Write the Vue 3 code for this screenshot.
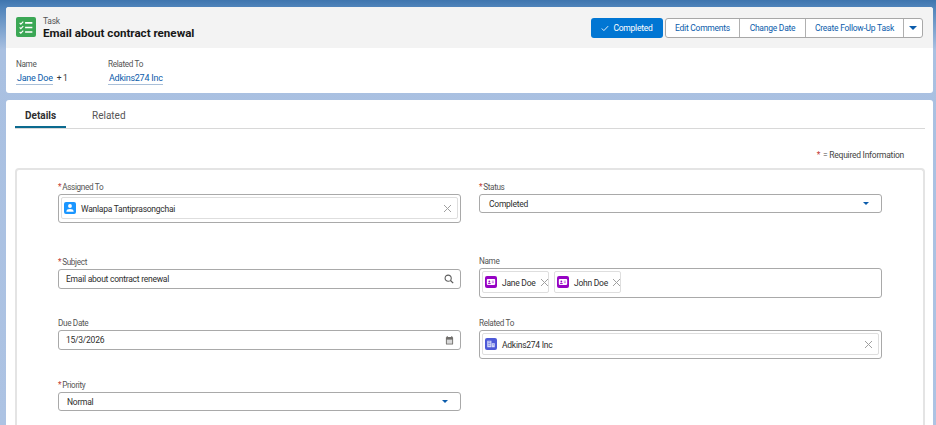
<template>
  <div class="page">
    <section class="highlights">
      <div class="head">
        <div class="icon-task">
          <svg viewBox="0 0 22 22" width="20" height="20">
            <path d="M4 6.500l1.300 1.300L8 5M4 11.500l1.300 1.300L8 10M4 16.500l1.300 1.300L8 15" fill="none" stroke="#fff" stroke-width="1.300" />
            <path d="M10 6.500h8M10 11.500h8M10 16.500h8" fill="none" stroke="#fff" stroke-width="1.800" />
          </svg>
        </div>
        <div class="head-text">
          <div class="entity">Task</div>
          <div class="title">Email about contract renewal</div>
        </div>
        <div class="actions">
          <button class="btn-done">
            <svg viewBox="0 0 10 8" width="8" height="7"><path d="M1 4l2.600 2.600L9 1" fill="none" stroke="#fff" stroke-width="1.100" /></svg>
            Completed
          </button>
          <div class="btn-group">
            <button v-for="b in actions" :key="b.label" class="btn" :style="{ width: b.w + 'px' }">{{ b.label }}</button>
            <button class="btn more"><span class="caret"></span></button>
          </div>
        </div>
      </div>
      <div class="meta">
        <div class="meta-item name-item">
          <div class="meta-label">Name</div>
          <div><a class="meta-link">Jane Doe</a><span class="plus">+ 1</span></div>
        </div>
        <div class="meta-item">
          <div class="meta-label">Related To</div>
          <div><a class="meta-link">Adkins274 Inc</a></div>
        </div>
      </div>
    </section>

    <section class="detail">
      <div class="tabs">
        <div class="tab active">Details</div>
        <div class="tab">Related</div>
      </div>
      <div class="required-note"><span class="star">*</span> = Required Information</div>

      <div class="form-card">
        <div class="col">
          <div class="field f-assigned">
            <label><span class="star">*</span>Assigned To</label>
            <div class="box lookup">
              <div class="pill wide">
                <span class="icon-sm user">
                  <svg viewBox="0 0 12 12" width="10" height="10"><circle cx="6" cy="3.600" r="2.300" fill="#fff" /><path d="M1.600 10.400c0-2.300 1.800-3.200 4.400-3.200s4.400.9 4.400 3.200z" fill="#fff" /></svg>
                </span>
                <span class="pill-text">Wanlapa Tantiprasongchai</span>
                <span class="x"></span>
              </div>
            </div>
          </div>
          <div class="field f-subject">
            <label><span class="star">*</span>Subject</label>
            <div class="box input">
              <span>Email about contract renewal</span>
              <svg viewBox="0 0 12 12" width="10" height="10"><circle cx="5" cy="5" r="3.700" fill="none" stroke="#5c5c5c" stroke-width="1.300" /><path d="M7.800 7.800L11 11" stroke="#5c5c5c" stroke-width="1.500" /></svg>
            </div>
          </div>
          <div class="field f-due">
            <label>Due Date</label>
            <div class="box input">
              <span>15/3/2026</span>
              <svg viewBox="0 0 10 10" width="9" height="9"><path d="M2.500 0v1.500M7.500 0v1.500" stroke="#706e6b" stroke-width="1" /><rect x="1" y="1" width="8" height="8.500" rx="1" fill="#706e6b" /><rect x="2" y="4" width="6" height="4.500" fill="#d8d8d8" /></svg>
            </div>
          </div>
          <div class="field f-priority">
            <label><span class="star">*</span>Priority</label>
            <div class="box input select">
              <span>Normal</span>
              <span class="caret small"></span>
            </div>
          </div>
        </div>

        <div class="col">
          <div class="field f-status">
            <label><span class="star">*</span>Status</label>
            <div class="box input select">
              <span class="status-text">Completed</span>
              <span class="caret small"></span>
            </div>
          </div>
          <div class="field f-name">
            <label>Name</label>
            <div class="box lookup multi">
              <div v-for="p in people" :key="p" class="pill">
                <span class="icon-sm contact">
                  <svg viewBox="0 0 12 12" width="10" height="10"><rect x="1" y="2.500" width="10" height="7" rx="1" fill="#fff" /><circle cx="4" cy="5.300" r="1.100" fill="#9603c4" /><path d="M2.500 8c0-1 3-1 3 0zM7 5h2.500M7 6.800h2.500" fill="#9603c4" stroke="#9603c4" stroke-width=".6" /></svg>
                </span>
                <span class="pill-text">{{ p }}</span>
                <span class="x"></span>
              </div>
            </div>
          </div>
          <div class="field f-related">
            <label>Related To</label>
            <div class="box lookup">
              <div class="pill wide">
                <span class="icon-sm account">
                  <svg viewBox="0 0 12 12" width="10" height="10"><path d="M1.500 2h5v8h-5zM7 5h3.500v5H7z" fill="#d6dcf8" /><path d="M2.700 3.500h2.600M2.700 5.500h2.600M2.700 7.500h2.600M8 7h1.500" stroke="#4e5ad8" stroke-width=".8" /></svg>
                </span>
                <span class="pill-text">Adkins274 Inc</span>
                <span class="x"></span>
              </div>
            </div>
          </div>
        </div>
      </div>
    </section>
  </div>
</template>

<script setup>
const actions = [
  { label: 'Edit Comments', w: 74 },
  { label: 'Change Date', w: 66 },
  { label: 'Create Follow-Up Task', w: 98 }
]
const people = ['Jane Doe', 'John Doe']
</script>

<style scoped>
.page {
  width: 936px;
  height: 425px;
  overflow: hidden;
  box-sizing: border-box;
  padding: 7px 3px 0 6px;
  background: linear-gradient(180deg, #3f75ae 0, #4f83ba 7px, #a9c0e1 50px, #adc3e3 100%);
  font-family: Roboto, "Liberation Sans", sans-serif;
  font-size: 8.500px;
  letter-spacing: -0.25px;
  color: #2e2e2e;
}

.highlights {
  height: 86px;
  background: #fff;
  border-radius: 3px;
  overflow: hidden;
}

.head {
  height: 41px;
  box-sizing: border-box;
  padding: 10px 10px 0 10px;
  background: #f3f3f3;
  display: flex;
  align-items: flex-start;
}

.icon-task {
  width: 20px;
  height: 20px;
  border-radius: 2px;
  background: #3ba755;
  display: flex;
}

.head-text {
  margin-left: 7px;
  margin-top: -1px;
}

.entity {
  line-height: 11px;
  color: #555;
}

.title {
  font-size: 11.600px;
  font-weight: 700;
  line-height: 13px;
  letter-spacing: 0;
  color: #181818;
}

.actions {
  margin-left: auto;
  display: flex;
  gap: 2px;
}

button {
  font: inherit;
  letter-spacing: inherit;
  margin: 0;
  padding: 0;
  cursor: pointer;
}

.btn-done {
  width: 72px;
  height: 20px;
  margin-top: 1px;
  border: 0;
  border-radius: 3px;
  background: #0176d3;
  color: #fff;
  display: flex;
  align-items: center;
  justify-content: center;
  gap: 4px;
}

.btn-group {
  display: flex;
  height: 20px;
  margin-top: 1px;
  box-sizing: border-box;
  border: 1px solid #a8a8a8;
  border-radius: 3px;
  background: #fff;
}

.btn {
  border: 0;
  border-right: 1px solid #b0b0b0;
  background: none;
  color: #0b5cab;
  white-space: nowrap;
}

.more {
  width: 18px;
  border-right: 0;
  display: flex;
  align-items: center;
  justify-content: center;
}

.caret {
  display: block;
  border-left: 4px solid transparent;
  border-right: 4px solid transparent;
  border-top: 4px solid #0b5cab;
}

.caret.small {
  border-left-width: 3px;
  border-right-width: 3px;
  border-top-width: 3px;
}

.meta {
  display: flex;
  padding: 10px 0 0 10px;
}

.meta-item {
  line-height: 12px;
}

.name-item {
  width: 92px;
}

.meta-label {
  font-size: 8.200px;
  letter-spacing: -0.35px;
  color: #555;
  margin-bottom: 2px;
}

.meta-link {
  font-size: 9px;
  color: #0b5cab;
  border-bottom: 1px solid #a9bfd8;
  padding: 0 0 1px 1px;
}

.plus {
  margin-left: 4px;
  color: #333;
}

.detail {
  height: 330px;
  margin-top: 7px;
  background: #fff;
  border-radius: 3px 3px 0 0;
  padding: 0 8px 0 9px;
}

.tabs {
  height: 28px;
  display: flex;
  border-bottom: 1px solid #d8d8d8;
  font-size: 10px;
  letter-spacing: 0;
}

.tab {
  line-height: 32px;
  color: #555;
  padding: 0 10px;
  margin-right: 16px;
  width: 31px;
  text-align: center;
}

.tab.active {
  color: #2e2e2e;
  font-weight: 700;
  box-shadow: inset 0 -2px 0 #0b6a8f;
}

.required-note {
  margin-top: 20px;
  height: 19px;
  line-height: 12px;
  text-align: right;
  padding-right: 21px;
  color: #444;
}

.star {
  color: #c23934;
  margin-right: 1px;
}

.form-card {
  display: grid;
  grid-template-columns: 403px 403px;
  column-gap: 18px;
  box-sizing: border-box;
  height: 260px;
  padding: 0 0 0 41px;
  border-top: 2px solid #e4e4e4;
  border-left: 2px solid #e4e4e4;
  border-right: 2px solid #e4e4e4;
  border-radius: 4px 4px 0 0;
}

.col {
  display: flex;
  flex-direction: column;
}

.field label {
  display: block;
  font-size: 8.200px;
  letter-spacing: -0.35px;
  line-height: 12px;
  margin-bottom: 1px;
  color: #555;
}

.f-assigned,
.f-status {
  margin-top: 11px;
}

.f-subject {
  margin-top: 33px;
}

.f-due {
  margin-top: 28px;
}

.f-priority {
  margin-top: 29px;
}

.f-name {
  margin-top: 42px;
}

.f-related {
  margin-top: 19px;
}

.box {
  box-sizing: border-box;
  border: 1px solid #a9a9a9;
  border-radius: 3px;
  background: #fff;
  color: #2e2e2e;
}

.input {
  height: 20px;
  display: flex;
  align-items: center;
  padding: 0 6px 0 7px;
  justify-content: space-between;
}

.select {
  padding: 0 12px 0 8px;
  height: 19px;
}

.status-text {
  margin-top: 1px;
  margin-left: 1px;
}

.lookup {
  height: 29px;
  padding: 2px;
  display: flex;
}

.multi {
  gap: 5px;
  height: 30px;
}

.pill {
  display: flex;
  align-items: center;
  box-sizing: border-box;
  height: 22px;
  border: 1px solid #dedede;
  border-radius: 2px;
  padding: 0 2px;
  gap: 5px;
}

.pill-text {
  white-space: nowrap;
  margin-top: 1px;
}

.pill.wide {
  flex: 1;
}

.pill.wide .x {
  margin-left: auto;
  margin-right: 4px;
}

.multi .pill {
  width: 67px;
}

.multi .x {
  margin-left: auto;
  margin-right: 3px;
}

.icon-sm {
  width: 12px;
  height: 12px;
  border-radius: 2px;
  display: flex;
  align-items: center;
  justify-content: center;
  flex: none;
}

.user {
  background: #1b96ff;
}

.contact {
  background: #9603c4;
}

.account {
  background: #4e5ad8;
}

.x {
  width: 7px;
  height: 7px;
  flex: none;
  background:
    linear-gradient(45deg, transparent 46%, #a0a0a0 46%, #a0a0a0 54%, transparent 54%),
    linear-gradient(-45deg, transparent 46%, #a0a0a0 46%, #a0a0a0 54%, transparent 54%);
}
</style>

<style>
html,
body {
  margin: 0;
  overflow: hidden;
}
</style>
